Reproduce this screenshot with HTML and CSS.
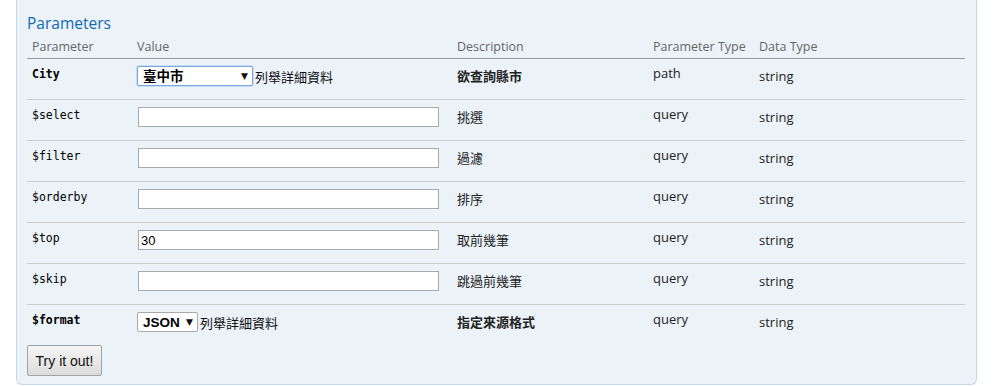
FILE: index.html
```html
<!DOCTYPE html>
<html lang="zh-Hant">
<head>
  <meta charset="UTF-8" />
  <title>Parameters</title>
  <link rel="stylesheet" href="styles.css">
</head>
<body>

<div class="operation">
  <h4>Parameters</h4>
  <table class="params">
    <thead>
      <tr>
        <th class="col-name">Parameter</th>
        <th class="col-value">Value</th>
        <th class="col-desc">Description</th>
        <th class="col-ptype">Parameter Type</th>
        <th>Data Type</th>
      </tr>
    </thead>
    <tbody>
      <tr>
        <td class="code required">City</td>
        <td>
          <div class="select-wrap">
            <span class="select focused city">臺中市<span class="arrow">▼</span></span>
            <span class="enum-note">列舉詳細資料</span>
          </div>
        </td>
        <td class="desc required">欲查詢縣市</td>
        <td class="ptype">path</td>
        <td class="dtype">string</td>
      </tr>
      <tr>
        <td class="code">$select</td>
        <td><input class="parameter" type="text" value=""></td>
        <td class="desc">挑選</td>
        <td class="ptype">query</td>
        <td class="dtype">string</td>
      </tr>
      <tr>
        <td class="code">$filter</td>
        <td><input class="parameter" type="text" value=""></td>
        <td class="desc">過濾</td>
        <td class="ptype">query</td>
        <td class="dtype">string</td>
      </tr>
      <tr>
        <td class="code">$orderby</td>
        <td><input class="parameter" type="text" value=""></td>
        <td class="desc">排序</td>
        <td class="ptype">query</td>
        <td class="dtype">string</td>
      </tr>
      <tr>
        <td class="code">$top</td>
        <td><input class="parameter" type="text" value="30"></td>
        <td class="desc">取前幾筆</td>
        <td class="ptype">query</td>
        <td class="dtype">string</td>
      </tr>
      <tr>
        <td class="code">$skip</td>
        <td><input class="parameter" type="text" value=""></td>
        <td class="desc">跳過前幾筆</td>
        <td class="ptype">query</td>
        <td class="dtype">string</td>
      </tr>
      <tr class="last">
        <td class="code required">$format</td>
        <td>
          <div class="select-wrap">
            <span class="select json">JSON<span class="arrow">▼</span></span>
            <span class="enum-note">列舉詳細資料</span>
          </div>
        </td>
        <td class="desc required">指定來源格式</td>
        <td class="ptype">query</td>
        <td class="dtype">string</td>
      </tr>
    </tbody>
  </table>

  <div class="sandbox">
    <button class="submit">Try it out!</button>
  </div>
</div>

</body>
</html>
```

FILE: styles.css
```css
body {
  margin: 0;
  background-color: white;
  font-family: "Open Sans", "Noto Sans CJK TC", sans-serif;
}

.operation {
  width: 939px;
  height: 371px;
  margin-left: 16px;
  padding: 13px 10px 0 10px;
  background-color: #ebf3f9;
  border: 1px solid #c3d9ec;
  border-top: none;
  border-radius: 0 0 6px 6px;
}

.operation h4 {
  margin: 0;
  font-size: 15.5px;
  font-weight: normal;
  line-height: 20px;
  color: #0f6ab4;
}

table.params {
  width: 938px;
  border-collapse: collapse;
  table-layout: fixed;
}

.params th {
  padding: 7px 5px 4px 5px;
  font-size: 12.5px;
  font-weight: normal;
  line-height: 14px;
  color: #666;
  text-align: left;
  border-bottom: 1px solid #999;
}

.col-name { width: 95px; }
.col-value { width: 310px; }
.col-desc { width: 186px; }
.col-ptype { width: 96px; }

.params td {
  height: 32px;
  padding: 7px 5px 0 5px;
  vertical-align: top;
  border-bottom: 1px solid #ccc;
  font-size: 13px;
  line-height: 19px;
  color: #222;
}

.params tr.last td {
  border-bottom: none;
  height: 30px;
}

.params td.code {
  font-family: "DejaVu Sans Mono", monospace;
  font-size: 11.5px;
  color: #000;
  padding-top: 6px;
}

.params td.required {
  font-weight: bold;
}

.params td.desc {
  font-family: "Noto Sans CJK TC", sans-serif;
  color: #222;
  padding-top: 7px;
}

.params td.ptype {
  padding-top: 5px;
}

.params td.dtype {
  padding-top: 8px;
}

input.parameter {
  box-sizing: border-box;
  display: block;
  width: 301px;
  height: 20px;
  margin: 0 0 0 1px;
  padding: 1px 2px;
  border: 1px solid #aaa;
  background: white;
  font-family: "Liberation Sans", Arial, sans-serif;
  font-size: 13px;
  color: #000;
}

.select-wrap {
  display: flex;
  align-items: center;
  gap: 2px;
}

.select {
  box-sizing: border-box;
  display: flex;
  align-items: center;
  justify-content: space-between;
  height: 20px;
  padding: 0 4px 0 5px;
  background: white;
  border: 1px solid #a9a9a9;
  border-radius: 2px;
  font-family: "Liberation Sans", "Noto Sans CJK TC", sans-serif;
  font-weight: bold;
  font-size: 13.5px;
  color: #000;
}

.select.focused {
  border-color: #7aa7e0;
  box-shadow: 0 0 0 1px #c7dcf5;
}

.select.city {
  width: 116px;
}

.select.json {
  width: 61px;
}

.arrow {
  font-family: "DejaVu Sans", sans-serif;
  font-size: 9px;
  font-weight: normal;
  color: #111;
}

.enum-note {
  font-family: "Noto Sans CJK TC", sans-serif;
  font-size: 13px;
  color: #111;
}

.sandbox {
  padding-top: 2px;
}

button.submit {
  width: 75px;
  height: 31px;
  padding: 0;
  background: linear-gradient(#f5f5f5, #dcdcdc);
  border: 1px solid #a3a3a3;
  border-radius: 2px;
  font-family: "Liberation Sans", Arial, sans-serif;
  font-size: 14px;
  color: #111;
  cursor: pointer;
}
```
